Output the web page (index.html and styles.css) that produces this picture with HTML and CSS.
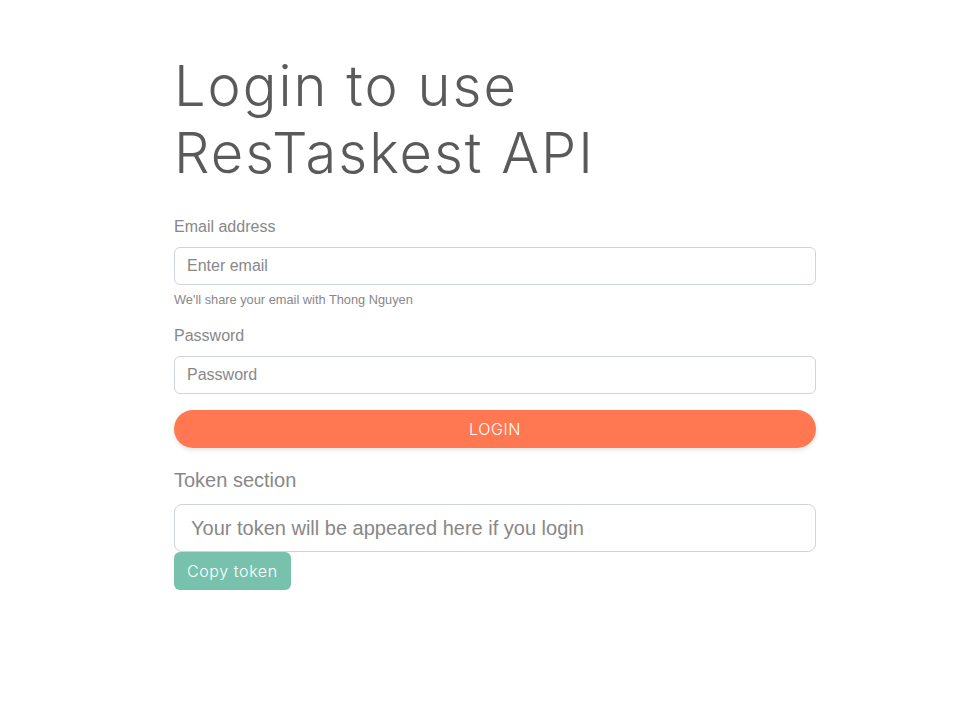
FILE: index.html
```html
<!DOCTYPE html>
<html>
<head>
<meta charset="utf-8">
<link rel="stylesheet" href="styles.css">
</head>
<body>
<main class="page">
  <h1 class="title">Login to use<br>ResTaskest API</h1>
  <form class="form">
    <div class="group">
      <label class="label">Email address</label>
      <input class="input" type="email" placeholder="Enter email">
      <small class="help">We'll share your email with Thong Nguyen</small>
    </div>
    <div class="group group-last">
      <label class="label">Password</label>
      <input class="input" type="password" placeholder="Password">
    </div>
    <button type="button" class="btn btn-login">LOGIN</button>
    <div class="token">
      <label class="label label-lg">Token section</label>
      <input class="input input-lg" type="text" placeholder="Your token will be appeared here if you login">
      <button type="button" class="btn btn-copy">Copy token</button>
    </div>
  </form>
</main>
</body>
</html>
```

FILE: styles.css
```css
* { box-sizing: border-box; }
html, body { margin: 0; padding: 0; background: #fff; }
body {
  font-family: "Liberation Sans", Arial, sans-serif;
  color: #888;
  font-size: 16px;
}
.page {
  width: 642px;
  margin-left: 174px;
  padding-top: 53px;
}
.title {
  margin: 0 0 28px;
  font-family: Inter, sans-serif;
  font-weight: 300;
  font-size: 56px;
  line-height: 67px;
  color: #5a5a5a;
  letter-spacing: 2px;
}
.form { display: flex; flex-direction: column; }
.group { display: flex; flex-direction: column; margin-bottom: 15px; }
.group-last { margin-bottom: 16px; }
.label {
  display: block;
  font-size: 16px;
  line-height: 24px;
  margin-bottom: 8px;
  color: #888;
}
.label-lg { font-size: 20px; line-height: 30px; margin-bottom: 9px; }
.input {
  display: block;
  width: 100%;
  height: 38px;
  border: 1px solid #ced4da;
  border-radius: 6px;
  padding: 0 12px;
  font-family: "Liberation Sans", Arial, sans-serif;
  font-size: 16px;
  color: #555;
  background: #fff;
  outline: none;
}
.input::placeholder { color: #888; }
.input-lg {
  height: 48px;
  border-radius: 8px;
  padding: 0 16px;
  font-size: 20px;
}
.help {
  display: block;
  margin-top: 5px;
  font-size: 12.8px;
  line-height: 19px;
  color: #888;
}
.btn {
  font-family: Inter, sans-serif;
  font-weight: 300;
  font-size: 16px;
  letter-spacing: 0.6px;
  color: #fff;
  border: none;
  cursor: pointer;
}
.btn-login {
  height: 38px;
  width: 100%;
  background: #ff7851;
  border-radius: 19px;
  box-shadow: 0 2px 5px rgba(0,0,0,0.12);
}
.token { display: flex; flex-direction: column; align-items: flex-start; margin-top: 17px; }
.btn-copy {
  height: 38px;
  padding: 0 13px;
  background: #78c2ad;
  border-radius: 6px;
}
```
